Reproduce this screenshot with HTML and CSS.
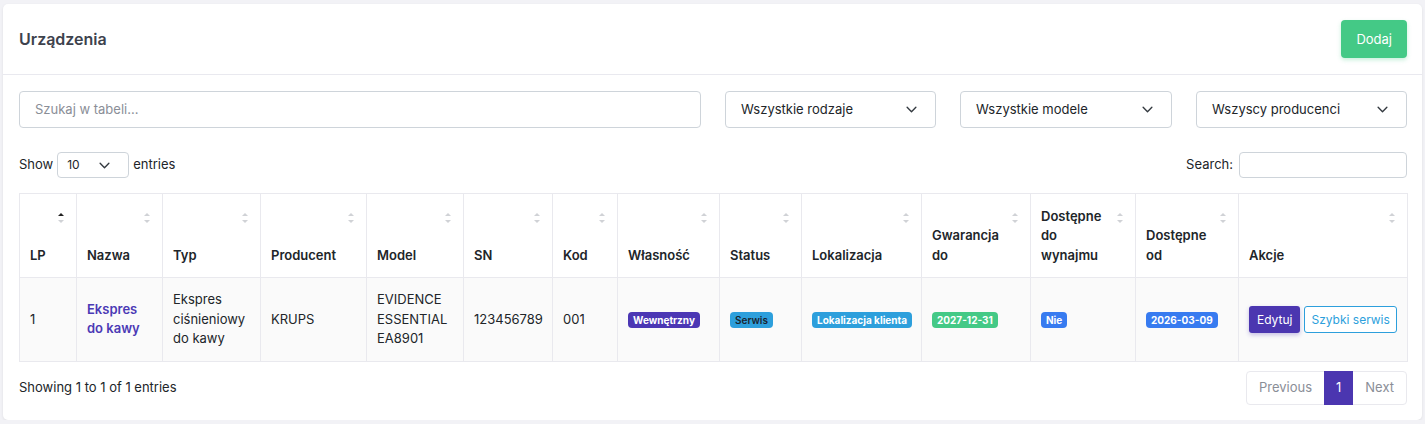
FILE: index.html
```html
<!DOCTYPE html>
<html lang="pl">
<head>
<meta charset="utf-8">
<title>Urządzenia</title>
<link rel="stylesheet" href="styles.css">
</head>
<body>
<div class="card">
  <div class="card-header">
    <h1 class="title">Urządzenia</h1>
    <button class="btn btn-success">Dodaj</button>
  </div>
  <div class="card-body">
    <div class="filters">
      <div class="input">Szukaj w tabeli...</div>
      <div class="select">Wszystkie rodzaje<svg class="chev" viewBox="0 0 12 8"><path d="M1 1.5l5 5 5-5" fill="none" stroke="#343a40" stroke-width="1.6" stroke-linecap="round" stroke-linejoin="round"/></svg></div>
      <div class="select">Wszystkie modele<svg class="chev" viewBox="0 0 12 8"><path d="M1 1.5l5 5 5-5" fill="none" stroke="#343a40" stroke-width="1.6" stroke-linecap="round" stroke-linejoin="round"/></svg></div>
      <div class="select">Wszyscy producenci<svg class="chev" viewBox="0 0 12 8"><path d="M1 1.5l5 5 5-5" fill="none" stroke="#343a40" stroke-width="1.6" stroke-linecap="round" stroke-linejoin="round"/></svg></div>
    </div>
    <div class="dt-top">
      <div class="length">Show <div class="small-select">10<svg class="chev-sm" viewBox="0 0 12 8"><path d="M1 1.5l5 5 5-5" fill="none" stroke="#343a40" stroke-width="1.6" stroke-linecap="round" stroke-linejoin="round"/></svg></div> entries</div>
      <div class="search">Search: <div class="search-input"></div></div>
    </div>
    <table class="table">
      <colgroup>
        <col style="width:57px"><col style="width:86px"><col style="width:98px"><col style="width:106px"><col style="width:97px"><col style="width:89px"><col style="width:65px"><col style="width:102px"><col style="width:82px"><col style="width:120px"><col style="width:109px"><col style="width:105px"><col style="width:103px"><col style="width:169px">
      </colgroup>
      <thead>
        <tr>
          <th class="asc">LP<i class="sort"></i></th>
          <th>Nazwa<i class="sort"></i></th>
          <th>Typ<i class="sort"></i></th>
          <th>Producent<i class="sort"></i></th>
          <th>Model<i class="sort"></i></th>
          <th>SN<i class="sort"></i></th>
          <th>Kod<i class="sort"></i></th>
          <th>Własność<i class="sort"></i></th>
          <th>Status<i class="sort"></i></th>
          <th>Lokalizacja<i class="sort"></i></th>
          <th>Gwarancja do<i class="sort"></i></th>
          <th>Dostępne do wynajmu<i class="sort"></i></th>
          <th>Dostępne od<i class="sort"></i></th>
          <th>Akcje<i class="sort"></i></th>
        </tr>
      </thead>
      <tbody>
        <tr>
          <td>1</td>
          <td><a class="link">Ekspres do kawy</a></td>
          <td>Ekspres ciśnieniowy do kawy</td>
          <td>KRUPS</td>
          <td>EVIDENCE ESSENTIAL EA8901</td>
          <td>123456789</td>
          <td>001</td>
          <td><span class="badge b-purple">Wewnętrzny</span></td>
          <td><span class="badge b-info-dark">Serwis</span></td>
          <td><span class="badge b-info">Lokalizacja klienta</span></td>
          <td><span class="badge b-green">2027-12-31</span></td>
          <td><span class="badge b-blue">Nie</span></td>
          <td><span class="badge b-blue">2026-03-09</span></td>
          <td class="actions"><button class="btn-sm btn-primary">Edytuj</button><button class="btn-sm btn-outline">Szybki serwis</button></td>
        </tr>
      </tbody>
    </table>
    <div class="dt-bottom">
      <div class="info">Showing 1 to 1 of 1 entries</div>
      <div class="pagination">
        <span class="page">Previous</span>
        <span class="page active">1</span>
        <span class="page">Next</span>
      </div>
    </div>
  </div>
</div>
</body>
</html>
```
FILE: styles.css
```css
* { box-sizing: border-box; }
html, body { margin: 0; }
body {
  background: #f2f2f6;
  padding: 4px 3px 0 3px;
  font-family: Inter, "Noto Sans", sans-serif;
  font-size: 13px;
  line-height: 1.5;
  color: #212529;
}
.card {
  background: #fff;
  border-radius: 5px;
  box-shadow: 0 1px 3px rgba(0,0,0,0.08);
  height: 416px;
}
.card-header {
  display: flex;
  justify-content: space-between;
  align-items: center;
  padding: 16px 15px 16px 16px;
  border-bottom: 1px solid #e9e9ef;
}
.title {
  margin: 0;
  font-size: 16px;
  font-weight: 600;
  color: #3d424d;
}
.btn {
  border: 0;
  font-family: inherit;
  font-size: 13px;
  height: 38px;
  padding: 0 15px;
  border-radius: 4px;
}
.btn-success {
  background: #44c986;
  color: #fff;
  box-shadow: 0 2px 4px rgba(68,201,134,0.3);
}
.card-body {
  padding: 16px 15px 0 16px;
}
.filters {
  display: grid;
  grid-template-columns: 682px 211px 212px 211px;
  column-gap: 24px;
}
.input, .select {
  height: 37px;
  border: 1px solid #ced4da;
  border-radius: 4px;
  display: flex;
  align-items: center;
  padding: 0 15px;
  font-size: 13px;
}
.input { color: #8a8e97; }
.select {
  justify-content: space-between;
  color: #212529;
}
.chev { width: 11px; height: 7px; margin-right: 3px; }
.dt-top {
  margin-top: 24px;
  display: flex;
  justify-content: space-between;
  align-items: center;
}
.length, .search {
  display: flex;
  align-items: center;
  gap: 4px;
}
.small-select {
  width: 72px;
  height: 26px;
  border: 1px solid #ced4da;
  border-radius: 4px;
  display: flex;
  align-items: center;
  justify-content: space-between;
  padding: 0 18px 0 9px;
  font-size: 12px;
}
.chev-sm { width: 11px; height: 7px; }
.search-input {
  width: 168px;
  height: 26px;
  border: 1px solid #ced4da;
  border-radius: 4px;
  margin-left: 2px;
}
.table {
  margin-top: 15px;
  width: 1388px;
  border-collapse: collapse;
  table-layout: fixed;
}
.table th, .table td {
  border: 1px solid #e9e9ee;
  padding: 12px 10px;
  text-align: left;
}
.table th {
  position: relative;
  vertical-align: bottom;
  font-weight: 600;
  padding-right: 22px;
  line-height: 19.5px;
  height: 84px;
}
.sort {
  position: absolute;
  right: 12px;
  top: 19px;
  width: 6px;
  height: 10px;
}
.sort::before, .sort::after {
  content: "";
  position: absolute;
  left: 0;
  border-left: 3px solid transparent;
  border-right: 3px solid transparent;
}
.sort::before { top: 0; border-bottom: 3.5px solid #d0d2d6; }
.sort::after { bottom: 0; border-top: 3.5px solid #d0d2d6; }
.asc .sort::before { border-bottom-color: #222; }
.table tbody td {
  background: #fafafa;
  vertical-align: middle;
  height: 83px;
}
.link {
  color: #4b39b5;
  font-weight: 600;
}
.badge {
  display: inline-block;
  font-size: 10px;
  font-weight: 700;
  line-height: 16px;
  padding: 0 5px;
  border-radius: 4px;
  color: #fff;
  white-space: nowrap;
  vertical-align: middle;
}
.b-purple { background: #4b37b4; }
.b-info { background: #2d9fdc; }
.b-info-dark { background: #2d9fdc; color: #1a2430; font-weight: 600; }
.b-green { background: #44c986; }
.b-blue { background: #377bf0; }
.actions { white-space: nowrap; }
.btn-sm {
  font-family: inherit;
  font-size: 12px;
  height: 27px;
  border-radius: 3px;
  padding: 0 6px;
  vertical-align: middle;
}
.btn-primary {
  background: #4b36b0;
  color: #fff;
  border: 0;
  box-shadow: 0 2px 4px rgba(75,54,176,0.3);
  padding: 0 8px;
}
.btn-outline {
  background: #fff;
  color: #2d9fdc;
  border: 1px solid #2d9fdc;
  margin-left: 4px;
}
.dt-bottom {
  margin-top: 9px;
  display: flex;
  justify-content: space-between;
  align-items: center;
}
.pagination {
  display: flex;
  border: 1px solid #e9e9ee;
  border-radius: 4px;
  height: 34px;
}
.page {
  display: flex;
  align-items: center;
  padding: 0 12px;
  color: #8a8e97;
  font-size: 13px;
}
.page.active {
  background: #4b36b0;
  color: #fff;
  padding: 0 12px;
  margin: -1px 0;
}
```
